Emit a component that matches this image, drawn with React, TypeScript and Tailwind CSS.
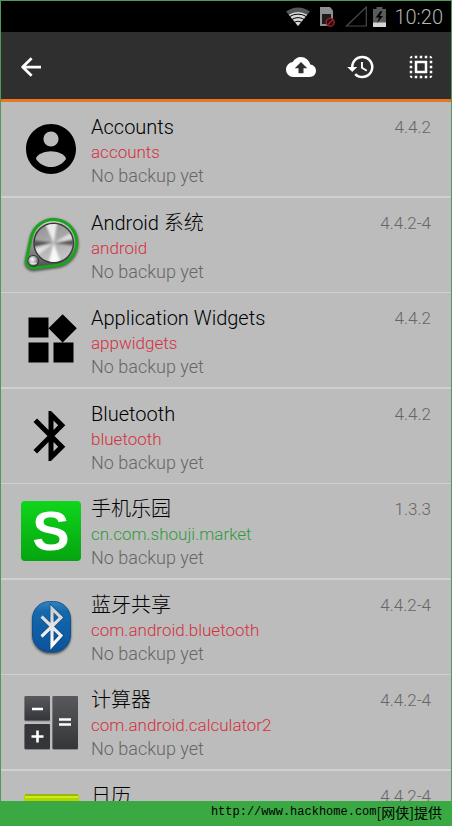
import type { ReactNode } from 'react';
import { MdBackup, MdBluetooth, MdRestore, MdSelectAll, MdWidgets } from 'react-icons/md';

type AppEntry = {
  name: string;
  pkg: string;
  version: string;
  icon: ReactNode;
  user?: boolean;
};

function AccountIcon() {
  return (
    <svg viewBox="0 0 24 24" className="size-full" fill="currentColor">
      <path d="M12 2C6.48 2 2 6.48 2 12s4.48 10 10 10 10-4.48 10-10S17.52 2 12 2zm0 3c1.66 0 3 1.34 3 3s-1.34 3-3 3-3-1.34-3-3 1.34-3 3-3zm0 14.2c-2.5 0-4.71-1.28-6-3.22.03-1.99 4-3.08 6-3.08 1.99 0 5.97 1.09 6 3.08-1.29 1.94-3.5 3.22-6 3.22z" />
    </svg>
  );
}

function KnobIcon() {
  return (
    <svg viewBox="0 0 60 60" className="size-full">
      <defs>
        <linearGradient id="knob" x1="0" y1="0" x2="0.3" y2="1">
          <stop offset="0" stopColor="#8e8e8e" />
          <stop offset="0.5" stopColor="#a8a8a8" />
          <stop offset="1" stopColor="#c4c4c4" />
        </linearGradient>
        <linearGradient id="plate" x1="0" y1="0" x2="0" y2="1">
          <stop offset="0" stopColor="#d0d0d0" />
          <stop offset="0.6" stopColor="#8a8a8a" />
          <stop offset="1" stopColor="#4c4c4c" />
        </linearGradient>
        <radialGradient id="ball" cx="0.4" cy="0.35" r="0.7">
          <stop offset="0" stopColor="#ffffff" />
          <stop offset="0.5" stopColor="#b0b0b0" />
          <stop offset="1" stopColor="#3a3a3a" />
        </radialGradient>
        <clipPath id="knobClip">
          <circle cx="32.7" cy="28" r="19" />
        </clipPath>
        <filter id="soft" x="-20%" y="-20%" width="140%" height="140%">
          <feGaussianBlur stdDeviation="1.2" />
        </filter>
      </defs>
      <path d="M10.2 24A23 23 0 1 1 34.9 51.5L13 54.500A7 7 0 0 1 5.5 46Z" fill="#333" stroke="#333" strokeWidth="4" opacity="0.7" filter="url(#soft)" />
      <path d="M10.2 23A23 23 0 1 1 34.9 50.500L13 53A7 7 0 0 1 5.5 44.5Z" fill="url(#plate)" stroke="#18a51c" strokeWidth="3" />
      <circle cx="32.7" cy="28" r="20.5" fill="#3a3a3a" />
      <circle cx="32.7" cy="28" r="19" fill="url(#knob)" />
      <g clipPath="url(#knobClip)">
        <g filter="url(#soft)">
          <path d="M32.7 28L22 4h15z" fill="#fff" opacity="0.8" />
          <path d="M32.7 28L26 54h16z" fill="#fff" opacity="0.9" />
          <path d="M32.7 28L58 13v10z" fill="#fff" opacity="0.6" />
          <path d="M32.7 28L8 35v12z" fill="#fff" opacity="0.6" />
          <path d="M32.7 28L8 25v8z" fill="#333" opacity="0.7" />
          <path d="M32.7 28L58 23v8z" fill="#333" opacity="0.7" />
        </g>
      </g>
      <circle cx="12.3" cy="46" r="6" fill="#3a3a3a" />
      <circle cx="12.3" cy="46" r="5" fill="url(#ball)" />
      <path d="M9 47.500a3.500 2.200 0 0 0 7 0z" fill="#fff" opacity="0.7" />
    </svg>
  );
}

function MarketIcon() {
  return (
    <div className="flex size-full items-center justify-center rounded-sm bg-linear-to-b from-[#10d51c] to-[#05a50f] font-['Liberation_Sans',sans-serif] text-[56px] font-bold text-white">
      S
    </div>
  );
}

function BlueBadgeIcon() {
  const rune = 'M20.500 19.500L40 38.500L31 48.500V11.500L40 20.500L20.500 39.500';
  return (
    <svg viewBox="0 0 60 60" className="size-full">
      <defs>
        <linearGradient id="badge" x1="0" y1="0" x2="0" y2="1">
          <stop offset="0" stopColor="#3583bd" />
          <stop offset="0.2" stopColor="#1369ae" />
          <stop offset="1" stopColor="#0b539c" />
        </linearGradient>
        <linearGradient id="rune" x1="0" y1="0" x2="0" y2="1">
          <stop offset="0" stopColor="#c9ccd0" />
          <stop offset="1" stopColor="#ffffff" />
        </linearGradient>
        <filter id="badgeShadow" x="-20%" y="-20%" width="140%" height="140%">
          <feGaussianBlur stdDeviation="1.2" />
        </filter>
      </defs>
      <rect x="11" y="6" width="39" height="51" rx="18" fill="#222" opacity="0.7" filter="url(#badgeShadow)" />
      <rect x="11.500" y="4.500" width="38" height="50.500" rx="17" fill="url(#badge)" stroke="#0b4a88" strokeWidth="0.8" />
      <path d={rune} fill="none" stroke="#07386b" strokeWidth="4.500" opacity="0.7" />
      <path d={rune} fill="none" stroke="url(#rune)" strokeWidth="3.200" />
    </svg>
  );
}

function CalculatorIcon() {
  return (
    <svg viewBox="0 0 60 60" className="size-full">
      <defs>
        <linearGradient id="key" x1="0" y1="0" x2="0" y2="1">
          <stop offset="0" stopColor="#57595d" />
          <stop offset="1" stopColor="#34363a" />
        </linearGradient>
      </defs>
      <rect x="3.500" y="4.500" width="25.500" height="25" rx="1" fill="#8a8a8a" />
      <rect x="3.500" y="33" width="25.500" height="25" rx="1" fill="#8a8a8a" />
      <rect x="31.500" y="4.500" width="25.500" height="53.500" rx="1" fill="#8a8a8a" />
      <rect x="3.500" y="4" width="25.500" height="24.500" rx="1" fill="url(#key)" />
      <rect x="3.500" y="32" width="25.500" height="25" rx="1" fill="#34363a" />
      <rect x="31.500" y="4" width="25.500" height="53" rx="1" fill="url(#key)" />
      <path d="M11 17h11M10.500 44.500h12M16.500 38.500v12M38 27.500h12M38 32.500h12" stroke="#fff" strokeWidth="2.600" />
    </svg>
  );
}

function CalendarIcon() {
  return (
    <svg viewBox="0 0 60 60" className="size-full">
      <rect x="3" y="6" width="55" height="50" rx="2" fill="#f2f2f2" />
      <path d="M5 6h51a2 2 0 0 1 2 2v12H3V8a2 2 0 0 1 2-2z" fill="#b2d400" />
      <path d="M4 7h53" stroke="#93ac12" strokeWidth="1.500" />
      <path d="M4 9h53" stroke="#c9ee1c" strokeWidth="2" />
    </svg>
  );
}

const apps: AppEntry[] = [
  { name: 'Accounts', pkg: 'accounts', version: '4.4.2', icon: <AccountIcon /> },
  { name: 'Android 系统', pkg: 'android', version: '4.4.2-4', icon: <KnobIcon /> },
  { name: 'Application Widgets', pkg: 'appwidgets', version: '4.4.2', icon: <MdWidgets className="size-full" /> },
  { name: 'Bluetooth', pkg: 'bluetooth', version: '4.4.2', icon: <MdBluetooth className="size-full" /> },
  { name: '手机乐园', pkg: 'cn.com.shouji.market', version: '1.3.3', icon: <MarketIcon />, user: true },
  { name: '蓝牙共享', pkg: 'com.android.bluetooth', version: '4.4.2-4', icon: <BlueBadgeIcon /> },
  { name: '计算器', pkg: 'com.android.calculator2', version: '4.4.2-4', icon: <CalculatorIcon /> },
  { name: '日历', pkg: 'com.android.calendar', version: '4.4.2-4', icon: <CalendarIcon /> },
];

function StatusBar() {
  return (
    <div className="flex h-[31px] shrink-0 items-center justify-end bg-black pr-2">
      <svg width="24" height="20" viewBox="0 0 24 20" className="mr-2.5">
        <path d="M12 19L0 4.500Q12-3.500 24 4.500z" fill="#565656" />
        <path d="M12 19L2.800 7.800Q12 2 21.200 7.800z" fill="#d8d8d8" />
        <path d="M3.500 8.800Q12 3.800 20.500 8.800M6 11.600Q12 8 18 11.600M8.300 14.400Q12 12.300 15.700 14.400" fill="none" stroke="#000" strokeWidth="1" transform="translate(0 .8)" />
      </svg>
      <svg width="15" height="20" viewBox="0 0 15 20" className="mr-2.5">
        <path d="M0 0h10l3 3.500V19H0z" fill="#8f8f8f" />
        <path d="M2 7h9v10H2z" fill="#1c1c1c" />
        <circle cx="10.200" cy="15.300" r="4" fill="#1c1010" stroke="#a8202a" strokeWidth="1.300" />
        <path d="M7.500 18l5.500-5.500" stroke="#a8202a" strokeWidth="1.300" />
      </svg>
      <svg width="22" height="21" viewBox="0 0 22 21" className="mr-1.5">
        <path d="M1.500 20H21.300V1z" fill="none" stroke="#4a4a4a" strokeWidth="1.200" />
      </svg>
      <svg width="13" height="20" viewBox="0 0 13 20" className="mr-2">
        <path d="M3.500 0h6v2H13v18H0V2h3.500z" fill="#5a5a5a" />
        <path d="M0 15.500h13V20H0z" fill="#d6d6d6" />
        <path d="M7.500 4L2.800 10.500h3.400L4 16l6-7H6.800l2.400-4.500z" fill="#000" />
      </svg>
      <time className="text-xl leading-6 text-[#b4b4b4]">10:20</time>
    </div>
  );
}

function Toolbar() {
  return (
    <header className="flex shrink-0 items-center justify-between border-b-3 border-[#ea7420] bg-[#2f2f2f] px-[15px] pt-5 pb-[17px] text-white">
      <button type="button" aria-label="Back" className="size-[30px]">
        <svg viewBox="0 0 24 24" className="size-full" fill="none" stroke="currentColor" strokeLinejoin="round">
          <path d="M20 12H5.500M12.500 5L5.300 12l7.200 7" strokeWidth="2.200" />
        </svg>
      </button>
      <div className="flex gap-[30px]">
        <button type="button" aria-label="Back up">
          <MdBackup className="size-[30px]" />
        </button>
        <button type="button" aria-label="Restore">
          <MdRestore className="size-[30px]" />
        </button>
        <button type="button" aria-label="Select all">
          <MdSelectAll className="size-[30px]" />
        </button>
      </div>
    </header>
  );
}

function AppRow({ app }: { app: AppEntry }) {
  return (
    <li className="flex gap-2.5 border-b border-[#d0d0d0] px-5 odd:border-b-2">
      <div className="my-[17px] size-[60px] shrink-0 text-black">{app.icon}</div>
      <div className="min-w-0 flex-1 pt-[13px]">
        <h2 className="truncate text-xl leading-[25px] text-black">{app.name}</h2>
        <p className={app.user ? 'truncate text-[17px] leading-6 text-[#2f9a3c]' : 'truncate text-[17px] leading-6 text-[#d5303c]'}>
          {app.pkg}
        </p>
        <p className="text-lg leading-6 text-[#666666]">No backup yet</p>
      </div>
      <span className="pt-[13px] text-[17px] leading-[25px] text-[#666666]">{app.version}</span>
    </li>
  );
}

export default function App() {
  return (
    <div className="flex h-dvh flex-col bg-[#3aa843] font-['Roboto','Noto_Sans_CJK_SC',sans-serif] font-light antialiased">
      <div className="flex min-h-0 flex-1 flex-col border-x border-t border-[#4f9a58]">
        <StatusBar />
        <Toolbar />
        <ul className="min-h-0 flex-1 overflow-y-auto bg-[#bcbcbc] [scrollbar-width:none]">
          {apps.map((app) => (
            <AppRow key={app.pkg} app={app} />
          ))}
        </ul>
      </div>
      <footer className="flex h-[25px] shrink-0 items-center justify-end pr-2.5 pb-1 text-black">
        <span className="font-['Liberation_Mono',monospace] text-xs leading-5 font-normal">http://www.hackhome.com</span>
        <span className="font-['Noto_Sans_CJK_SC',sans-serif] text-sm leading-5 font-normal">[网侠]提供</span>
      </footer>
    </div>
  );
}
